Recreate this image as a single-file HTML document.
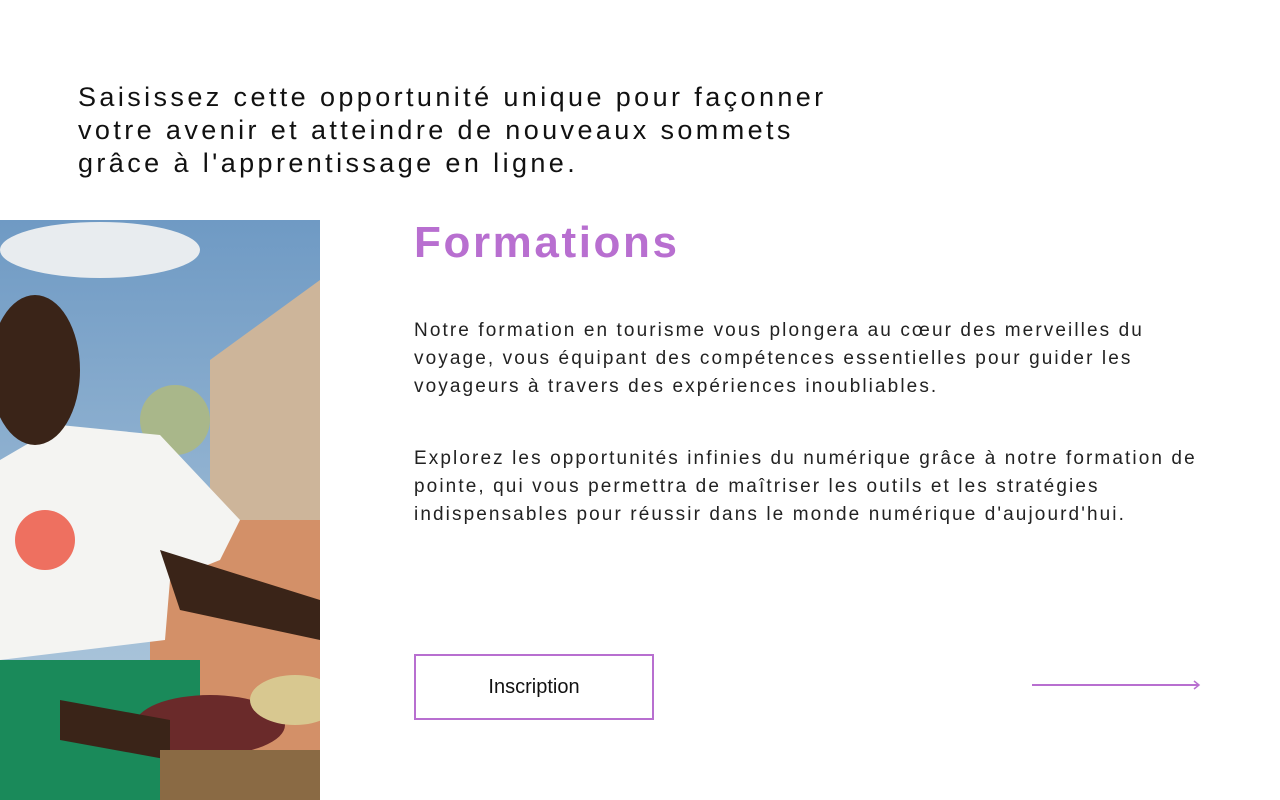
<!DOCTYPE html>
<html><head><meta charset="utf-8"><style>
*{margin:0;padding:0;box-sizing:border-box}
body{width:1280px;height:800px;background:#fff;position:relative;overflow:hidden;font-family:"Liberation Sans",sans-serif;color:#111}
.intro{position:absolute;left:78px;top:81px;font-size:27px;line-height:33px;letter-spacing:3.4px;white-space:nowrap}
h1{position:absolute;left:414px;top:218px;font-size:44px;font-weight:bold;color:#b86fd0;letter-spacing:2.6px}
.p{position:absolute;left:414px;font-size:19px;line-height:28px;letter-spacing:2.1px;color:#222;white-space:nowrap}
.btn{position:absolute;left:414px;top:654px;width:240px;height:66px;border:2px solid #b86fd0;font-size:20px;display:flex;align-items:center;justify-content:center;color:#111}
</style></head><body>
<div class="intro">Saisissez cette opportunité unique pour façonner<br>votre avenir et atteindre de nouveaux sommets<br>grâce à l'apprentissage en ligne.</div>
<svg style="position:absolute;left:0;top:220px" width="320" height="580" viewBox="0 0 320 580">
<defs><linearGradient id="sky" x1="0" y1="0" x2="0" y2="1"><stop offset="0" stop-color="#6f9ac4"/><stop offset="1" stop-color="#b9cfe0"/></linearGradient></defs>
<rect width="320" height="580" fill="url(#sky)"/>
<ellipse cx="100" cy="30" rx="100" ry="28" fill="#e8ecef"/>
<polygon points="210,140 320,60 320,310 210,310" fill="#cdb59a"/>
<circle cx="175" cy="200" r="35" fill="#a9b78a"/>
<rect x="150" y="300" width="170" height="280" fill="#d39068"/>
<path d="M0,240 L60,205 L160,215 L240,300 L220,340 L170,360 L165,420 L0,440Z" fill="#f4f4f2"/>
<circle cx="45" cy="320" r="30" fill="#ee7060"/>
<path d="M160,330 L320,380 L320,420 L180,390Z" fill="#3a2418"/>
<ellipse cx="35" cy="150" rx="45" ry="75" fill="#3a2418"/>
<rect x="0" y="440" width="200" height="140" fill="#1a8a5a"/>
<ellipse cx="210" cy="505" rx="75" ry="30" fill="#6a2a2a"/>
<ellipse cx="295" cy="480" rx="45" ry="25" fill="#d8c890"/>
<path d="M60,480 L170,500 L170,540 L60,520Z" fill="#3a2418"/>
<rect x="160" y="530" width="160" height="50" fill="#8a6a44"/>
</svg>
<h1>Formations</h1>
<div class="p" style="top:317px">Notre formation en tourisme vous plongera au cœur des merveilles du<br>voyage, vous équipant des compétences essentielles pour guider les<br>voyageurs à travers des expériences inoubliables.</div>
<div class="p" style="top:445px">Explorez les opportunités infinies du numérique grâce à notre formation de<br>pointe, qui vous permettra de maîtriser les outils et les stratégies<br>indispensables pour réussir dans le monde numérique d'aujourd'hui.</div>
<div class="btn">Inscription</div>
<svg style="position:absolute;left:1030px;top:679px" width="172" height="12"><line x1="2" y1="6" x2="169" y2="6" stroke="#b86fd0" stroke-width="2"/><path d="M164,2 L169,6 L164,10" fill="none" stroke="#b86fd0" stroke-width="1.5"/></svg>
</body></html>
